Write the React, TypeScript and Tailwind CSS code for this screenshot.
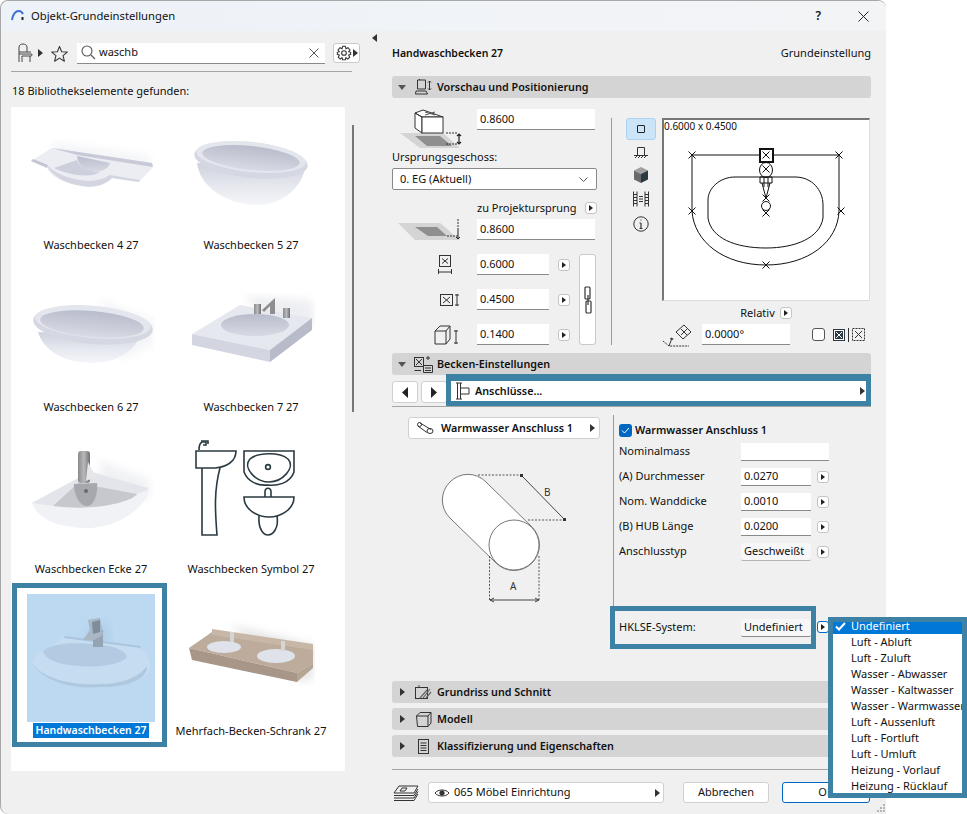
import type { ReactNode } from "react";

const teal = "border-[#3d81a5]";

function Tri({ dir = "right", className = "" }: { dir?: "right" | "down" | "left"; className?: string }) {
  const d = dir === "right" ? "M0 0L5 4L0 8Z" : dir === "down" ? "M0 0H8L4 5Z" : "M5 0L0 4L5 8Z";
  return (
    <svg width={dir === "down" ? 8 : 5} height={dir === "down" ? 5 : 8} className={`shrink-0 ${className}`}>
      <path d={d} fill={dir === "down" ? "#555" : "#333"} />
    </svg>
  );
}

function ArrowBtn({ blue = false }: { blue?: boolean }) {
  return (
    <div className={`flex h-[12px] w-[12px] items-center justify-center rounded-[3px] border bg-white ${blue ? "border-[#0067c0]" : "border-[#c4c4c4]"}`}>
      <svg width="4" height="6"><path d="M0 0L4 3L0 6Z" fill="#222" /></svg>
    </div>
  );
}

function Field({ value, w }: { value: string; w: string }) {
  return (
    <div className={`${w} flex h-[21px] shrink-0 items-center border-b border-[#8a8a8a] bg-white pl-[3px] text-[11px]`}>
      {value}
    </div>
  );
}

function SmallField({ value, w = "w-[70px]" }: { value: string; w?: string }) {
  return (
    <div className={`${w} flex h-[18px] shrink-0 items-center border-b border-[#8a8a8a] bg-white pl-[3px] text-[11px]`}>
      {value}
    </div>
  );
}

function SectionBar({ icon, title, open = false }: { icon: ReactNode; title: string; open?: boolean }) {
  return (
    <div className="flex h-[22px] w-[479px] shrink-0 items-center rounded-[3px] bg-[#d4d4d4]">
      <div className="flex w-[18px] justify-center pl-[2px]">{open ? <Tri dir="down" /> : <Tri />}</div>
      <div className="flex w-[27px] justify-center">{icon}</div>
      <span className="text-[10.75px] font-semibold text-[#111]">{title}</span>
    </div>
  );
}

function Sink({ view, children }: { view: string; children: ReactNode }) {
  return (
    <svg width="128" height="128" viewBox={view} className="overflow-hidden">
      <defs>
        <linearGradient id="bowl" x1="0" y1="0" x2="0" y2="1">
          <stop offset="0" stopColor="#cfd2dd" />
          <stop offset="0.55" stopColor="#e6e8ef" />
          <stop offset="1" stopColor="#f5f6fa" />
        </linearGradient>
        <linearGradient id="inner" x1="0" y1="0" x2="0" y2="1">
          <stop offset="0" stopColor="#b9bccb" />
          <stop offset="1" stopColor="#d8dae4" />
        </linearGradient>
        <linearGradient id="metal" x1="0" y1="0" x2="1" y2="0">
          <stop offset="0" stopColor="#8a8a8c" />
          <stop offset="0.5" stopColor="#b9b9bb" />
          <stop offset="1" stopColor="#6f6f72" />
        </linearGradient>
        <filter id="soft"><feGaussianBlur stdDeviation="4" /></filter>
      </defs>
      {children}
    </svg>
  );
}

const tiles: { label: string; view: string; art: ReactNode }[] = [
  {
    label: "Waschbecken 4 27",
    view: "27 108 128 128",
    art: (
      <>
        <path d="M55 142L150 156L150 168L50 158Z" fill="#e3e5ec" opacity="0.4" filter="url(#soft)" />
        <path d="M52 148L152 163L153 167L139 182L112 178C104 186 92 188 82 186C66 184 52 178 47 168L31 161Z" fill="#ebedf3" />
        <path d="M52 148L152 163L153 167L77 155Z" fill="#c8cbd7" />
        <path d="M48 168C55 178 68 184 82 186C92 188 104 186 112 178L139 182L140 180L110 175C100 181 90 182 80 180C66 178 54 172 48 166Z" fill="#d3d6e1" />
        <path d="M77 156C78 166 86 171 92 172C102 172 108 169 110 163Z" fill="url(#inner)" />
        <path d="M54 168L77 160C80 168 88 172 100 172C92 178 70 176 54 168Z" fill="#cdd0dc" />
        <path d="M31 161L47 168L48 165L33 159Z" fill="#c3c6d2" />
      </>
    ),
  },
  {
    label: "Waschbecken 5 27",
    view: "187 108 128 128",
    art: (
      <>
        <path d="M197 163C200 188 228 205 258 205C284 205 302 186 305 168Z" fill="url(#bowl)" />
        <ellipse cx="251" cy="160" rx="57" ry="18" transform="rotate(6 251 160)" fill="#d5d8e2" />
        <ellipse cx="251" cy="157" rx="55" ry="15" transform="rotate(6 251 157)" fill="#e4e6ed" />
        <ellipse cx="251" cy="158" rx="49" ry="12" transform="rotate(6 251 158)" fill="url(#inner)" />
      </>
    ),
  },
  {
    label: "Waschbecken 6 27",
    view: "27 270 128 128",
    art: (
      <>
        <path d="M100 300L154 320L152 345L120 360Z" fill="#e3e5ec" opacity="0.4" filter="url(#soft)" />
        <path d="M38 332C44 352 66 363 92 363C122 363 136 346 140 336Z" fill="url(#bowl)" />
        <ellipse cx="93" cy="325" rx="60" ry="19" transform="rotate(5 93 325)" fill="#d5d8e2" />
        <ellipse cx="93" cy="322" rx="58" ry="16" transform="rotate(5 93 322)" fill="#e4e6ed" />
        <ellipse cx="92" cy="324" rx="52" ry="13" transform="rotate(5 92 324)" fill="url(#inner)" />
      </>
    ),
  },
  {
    label: "Waschbecken 7 27",
    view: "187 270 128 128",
    art: (
      <>
        <path d="M245 296L312 300L315 325L270 325Z" fill="#d4d6de" opacity="0.4" filter="url(#soft)" />
        <path d="M192 334L240 305L312 318L270 350Z" fill="#e6e8ef" />
        <path d="M192 334L270 350L270 362L192 345Z" fill="#d3d6e1" />
        <path d="M270 350L312 318L312 330L270 362Z" fill="#b8bbc9" />
        <ellipse cx="255" cy="325" rx="34" ry="11" fill="url(#inner)" />
        <rect x="254" y="304" width="7" height="10" fill="url(#metal)" />
        <path d="M262 310L275 298V314H270V306L264 312Z" fill="#8e8e90" />
        <rect x="283" y="308" width="7" height="10" fill="url(#metal)" />
      </>
    ),
  },
  {
    label: "Waschbecken Ecke 27",
    view: "27 432 128 128",
    art: (
      <>
        <path d="M100 460L150 480L148 500L100 490Z" fill="#d6d8e0" opacity="0.35" filter="url(#soft)" />
        <path d="M32 503L84 475L92 472L148 488C150 505 118 528 88 528C60 528 38 520 32 503Z" fill="#f0f2f6" />
        <path d="M32 503L84 475L92 472L148 488L147 490C110 505 70 510 32 503Z" fill="#e3e5ea" />
        <path d="M53 506L78 483L137 494C134 500 100 512 53 506Z" fill="#c6c8ce" />
        <path d="M74 484C74 496 80 506 87 506C94 506 98 494 97 483Z" fill="#a6a8ae" />
        <circle cx="86" cy="491" r="2" fill="#6a6a70" />
        <rect x="78" y="451" width="12" height="32" rx="3" fill="url(#metal)" />
        <path d="M88 462L96 477L86 481Z" fill="#e7e7ea" />
      </>
    ),
  },
  {
    label: "Waschbecken Symbol 27",
    view: "187 432 128 128",
    art: (
      <g fill="none" stroke="#2b3a42" strokeWidth="1.6">
        <path d="M196 451H236C236 462 226 467 215 468H196Z" />
        <path d="M202 468V535H217C215 510 214 490 220 468" />
        <path d="M199 450C199 446 200 443 202 442H206V445H203" />
        <path d="M201 441H208V444" />
        <path d="M244 451H294V472C290 484 276 486 268 485C258 486 248 482 244 472Z" />
        <path d="M250 459C258 452 280 452 288 459C296 468 282 482 269 482C256 482 242 468 250 459Z" />
        <circle cx="268" cy="467" r="2.4" />
        <path d="M244 497H294C294 510 280 517 269 517C258 517 244 510 244 497Z" />
        <path d="M259 516C258 530 264 535 268 535C273 535 279 528 277 516" />
        <path d="M265 497V492C265 487 271 487 271 492V497" />
      </g>
    ),
  },
  {
    label: "Handwaschbecken 27",
    view: "27 594 128 128",
    art: (
      <>
        <rect x="27" y="594" width="128" height="128" fill="#bcd9f1" />
        <path d="M92 620L110 625L108 650L80 650Z" fill="#a8c8e4" opacity="0.6" filter="url(#soft)" />
        <path d="M65 636L132 645C146 650 152 660 150 668C146 680 124 688 100 687C72 690 40 680 32 662C36 652 44 650 46 650Z" fill="#c6dcf0" />
        <path d="M65 636L140 646L141 648L64 638Z" fill="#a9c4dd" />
        <path d="M43 652C48 644 70 642 92 644C112 645 126 650 127 657C122 664 100 668 80 666C60 665 46 660 43 652Z" fill="#b2cbe3" />
        <path d="M32 662C40 678 72 686 100 684C124 684 140 676 147 666C148 680 124 688 100 687C72 690 40 680 32 662Z" fill="#aec8e0" />
        <rect x="93" y="630" width="10" height="17" fill="#94a4b4" />
        <path d="M88 620L100 618L103 635L94 640L83 640L90 630Z" fill="#a9b6c4" />
        <path d="M92 622L100 620L100 632L93 634Z" fill="#7f8d9b" />
      </>
    ),
  },
  {
    label: "Mehrfach-Becken-Schrank 27",
    view: "187 594 128 128",
    art: (
      <>
        <path d="M230 625L314 645L312 680L296 680Z" fill="#d2d2d2" opacity="0.6" filter="url(#soft)" />
        <path d="M212 632L313 648V663L297 673L189 648Z" fill="#bdac9b" />
        <path d="M212 629L313 644V650L212 635Z" fill="#c8b7a6" />
        <path d="M189 648L297 673V682L192 660Z" fill="#a89788" />
        <path d="M297 673L313 663V668L297 682Z" fill="#b5a595" />
        <ellipse cx="224" cy="647" rx="17" ry="6" fill="#dfe2ea" />
        <ellipse cx="276" cy="656" rx="19" ry="7" fill="#dfe2ea" />
        <rect x="230" y="632" width="4" height="10" fill="#d5d5d5" />
        <rect x="281" y="641" width="4" height="10" fill="#d5d5d5" />
      </>
    ),
  },
];

function LeftPanel() {
  return (
    <div className="flex w-[371px] shrink-0 flex-col pl-[10px] pt-[11px]">
      <div className="flex h-[22px] items-center">
        <svg width="18" height="20" viewBox="0 0 18 20" fill="none" stroke="#444" strokeWidth="1" className="ml-[6px]">
          <path d="M2 19V4C2 2 4 1 6 1C8 1 10 2 10 4V9H2M2 11H14C16 11 15 13 14 13H5V19M13 13V19M10 9H14" />
        </svg>
        <Tri className="ml-[3px]" />
        <svg width="17" height="17" viewBox="0 0 24 24" fill="none" stroke="#333" strokeWidth="1.5" strokeLinejoin="round" className="ml-[8px]">
          <path d="M12 2L15 9.5L23 10L17 15L19 23L12 18.5L5 23L7 15L1 10L9 9.5Z" />
        </svg>
        <div className="ml-[9px] flex h-[21px] w-[248px] items-center border-b border-[#8a8a8a] bg-white">
          <svg width="15" height="15" viewBox="0 0 15 15" fill="none" stroke="#555" strokeWidth="1.1" className="ml-[4px]">
            <circle cx="6" cy="6" r="5" />
            <path d="M10 10L14 14" />
          </svg>
          <span className="ml-[3px] text-[11px]">waschb</span>
          <svg width="10" height="10" stroke="#555" className="ml-auto mr-[6px]">
            <path d="M0.5 0.5L9.5 9.5M9.5 0.5L0.5 9.5" />
          </svg>
        </div>
        <div className="ml-[8px] flex h-[20px] w-[27px] items-center justify-center gap-[1px] rounded-[3px] border border-[#c9c9c9] bg-white">
          <svg width="16" height="16" viewBox="0 0 24 24" fill="none" stroke="#333" strokeWidth="1.6">
            <circle cx="12" cy="12" r="3.5" />
            <path d="M10 2H14L15 5.5L18 4L21 7.5L19 10L22 11V14L19 15L20.5 18.5L17.5 21L15 19L14 22H10L9 19L6.5 21L3.5 18.5L5 15L2 14V11L5 10L3 7.5L6 4L9 5.5Z" />
          </svg>
          <Tri />
        </div>
      </div>
      <div className="mt-[7px] h-px w-[341px] bg-[#a5a5a5]" />
      <div className="mt-[11px] h-[16px] pl-[1px] text-[11px] leading-[16px]">18 Bibliothekselemente gefunden:</div>
      <div className="mt-[8px] flex">
        <div className="grid h-[664px] w-[334px] grid-cols-[160px_160px] content-start bg-white pt-[1px]">
          {tiles.map((t, i) => (
            <div key={t.label} className="relative flex h-[162px] flex-col items-center">
              <Sink view={t.view}>{t.art}</Sink>
              <span className={`mt-[1px] whitespace-nowrap leading-[15px] ${i === 6 ? "bg-[#0078d7] px-[2px] text-[10.5px] font-semibold text-white" : "px-[1px] text-[11px] text-[#111]"}`}>
                {t.label}
              </span>
              {i === 6 && <div className={`absolute left-[1px] top-[-11px] h-[164px] w-[155px] border-[5px] ${teal}`} />}
            </div>
          ))}
        </div>
        <div className="ml-[7px] mt-[18px] h-[287px] w-[2px] bg-[#777]" />
      </div>
    </div>
  );
}

function PreviewSection() {
  return (
    <div className="flex h-[255px] shrink-0">
      <div className="flex w-[206px] flex-col">
        <div className="flex h-[41px] pt-[10px]">
          <svg width="85" height="41" viewBox="0 0 85 41" className="shrink-0">
            <path d="M8 25H51L68 40H28Z" fill="#d4d4d4" />
            <path d="M23 28H48L60 38H35Z" fill="#8f8f8f" />
            <g fill="#fff" stroke="#333">
              <path d="M23 5L31 2L51 9H30ZM23 5L30 9V25L23 20Z" />
              <rect x="30" y="9" width="21" height="16" />
            </g>
            <path d="M33 4L43 7M43 4L33 7" stroke="#555" />
            <path d="M54 25H65M54 36H65" stroke="#333" strokeDasharray="2 1" />
            <path d="M67 26V36M65 28L67 26L69 28M65 34L67 36L69 34" stroke="#222" fill="none" strokeWidth="1.2" />
          </svg>
          <div className="mt-[1px]"><Field value="0.8600" w="w-[118px]" /></div>
        </div>
        <div className="mt-[10px] h-[16px] text-[11px] leading-[16px]">Ursprungsgeschoss:</div>
        <div className="mt-[3px] flex h-[22px] w-[205px] items-center justify-between rounded-[2px] border border-[#8a8a8a] bg-white pl-[7px] pr-[8px] text-[11px]">
          0. EG (Aktuell)
          <svg width="9" height="5" fill="none" stroke="#555"><path d="M0.5 0.5L4.5 4.5L8.5 0.5" /></svg>
        </div>
        <div className="ml-[85px] mt-[10px] flex h-[16px] items-center gap-[8px] whitespace-nowrap text-[11px]">
          zu Projektursprung
          <ArrowBtn />
        </div>
        <div className="mt-[3px] flex h-[21px]">
          <svg width="85" height="21" viewBox="0 0 85 21" className="shrink-0">
            <path d="M6 4H48L68 21H23Z" fill="#d4d4d4" />
            <path d="M23 8H45L55 17H36Z" fill="#8f8f8f" />
            <path d="M55 17H66M66 0V10" stroke="#333" strokeDasharray="2 1" />
            <path d="M66 10V20M64 18L66 20L68 18" stroke="#222" fill="none" />
          </svg>
          <Field value="0.8600" w="w-[118px]" />
        </div>
        <div className="mt-[14px] flex">
          <div className="flex w-[85px] flex-col items-end gap-[14px] pr-[17px]">
            <svg width="14" height="21" fill="none" stroke="#333" className="mr-[8px]">
              <rect x="1.5" y="1.5" width="11" height="11" />
              <path d="M4 4.5L10 9.5M10 4.5L4 9.5M0.5 15V20M13.5 15V20M0.5 18H13.5" />
            </svg>
            <svg width="20" height="21" fill="none" stroke="#333">
              <rect x="0.5" y="5.5" width="12" height="11" />
              <path d="M3 8L10 14M10 8L3 14M17 5V17M15 6H19M15 16H19" />
            </svg>
            <svg width="26" height="21" fill="none" stroke="#333">
              <path d="M1 7L6 2H16L12 7V20H1ZM12 7H1M16 2V15L12 20M22 6V20M20 7H24M20 19H24" />
            </svg>
          </div>
          <div className="flex flex-col gap-[14px]">
            {["0.6000", "0.4500", "0.1400"].map((v) => (
              <div key={v} className="flex h-[21px] items-center">
                <Field value={v} w="w-[72px]" />
                <div className="ml-[9px]"><ArrowBtn /></div>
              </div>
            ))}
          </div>
          <div className="ml-[9px] flex h-[91px] w-[17px] items-center justify-center rounded-[3px] border border-[#c9c9c9] bg-white">
            <svg width="8" height="28" fill="none" stroke="#333" strokeWidth="1.2">
              <rect x="1" y="1" width="5" height="12" rx="1" />
              <rect x="2" y="15" width="5" height="12" rx="1" />
              <path d="M4 9V19" />
            </svg>
          </div>
        </div>
      </div>
      <div className="ml-[13px] mt-[20px] h-[227px] w-px bg-[#9a9a9a]" />
      <div className="ml-[14px] mt-[20px] flex w-[30px] flex-col items-center">
        <div className="flex h-[22px] w-[30px] items-center justify-center rounded-[3px] border border-[#a9d3f5] bg-[#cce4f7]">
          <div className="h-[8px] w-[8px] rounded-[1px] border border-[#222]" />
        </div>
        <svg width="14" height="14" fill="none" stroke="#333" className="mt-[6px]">
          <path d="M3.5 9V1.5H10.5V9M0 9.5H14M1 12L3 10M4 12L6 10M7 12L9 10M10 12L12 10" />
        </svg>
        <svg width="14" height="16" className="mt-[7px]">
          <path d="M7 0L14 3.5L7 7L0 3.5Z" fill="#a0a0a0" />
          <path d="M0 3.5L7 7V16L0 12.5Z" fill="#6a6a6a" />
          <path d="M14 3.5L7 7V16L14 12.5Z" fill="#2b3a42" />
        </svg>
        <svg width="16" height="16" fill="none" stroke="#333" className="mt-[8px]">
          <path d="M0.5 0.5V15.5M15.5 0.5V15.5M4 0.5V15.5M12 0.5V15.5M0 3.5H4M0 6.5H4M0 9.5H4M0 12.5H4M12 3.5H16M12 6.5H16M12 9.5H16M12 12.5H16M6 5.5H10M6 8H10M6 10.5H10" />
        </svg>
        <svg width="16" height="16" fill="none" stroke="#333" className="mt-[9px]">
          <circle cx="8" cy="8" r="7.2" />
          <path d="M8 7V12.5M6.5 7H8M6.5 12.5H9.5M7.5 4H8.5" strokeWidth="1.2" />
        </svg>
      </div>
      <div className="ml-[6px] mt-[20px] flex w-[208px] flex-col">
        <div className="relative h-[183px] w-[208px] border-l-2 border-r border-t-2 border-b border-l-[#777] border-t-[#777] border-r-[#dcdcdc] border-b-[#dcdcdc] bg-white">
          <svg width="206" height="181" viewBox="664 120 206 181" fill="none" stroke="#111" className="absolute left-0 top-0">
            <path d="M692 155H840M692 155V211C694 242 724 265 766 265C808 265 838 242 839 211V155" />
            <path d="M735 177H795C812 177 823 190 823 205V218C820 238 795 248 766 248C735 248 711 238 708 218V200C708 188 720 177 735 177Z" />
            <rect x="760" y="149" width="13" height="13" strokeWidth="2" fill="#fff" />
            <ellipse cx="766" cy="170" rx="6.5" ry="7.5" />
            <path d="M760 177H772V183H760ZM762 183L766 198L770 183M764 178V187M768 178V187" />
            <circle cx="766" cy="206" r="4.5" />
            {[[692, 155], [839, 155], [692, 211], [841, 211], [766, 265], [766, 169], [766, 213], [766, 155], [766, 198]].map(([x, y]) => (
              <path key={`${x}-${y}`} d={`M${x - 3.5} ${y - 3.5}L${x + 3.5} ${y + 3.5}M${x + 3.5} ${y - 3.5}L${x - 3.5} ${y + 3.5}`} />
            ))}
            <text x="664" y="130" fill="#111" stroke="none" fontSize="10">0.6000 x 0.4500</text>
          </svg>
        </div>
        <div className="mt-[4px] flex h-[16px] items-center justify-center gap-[5px] text-[11px]">
          Relativ
          <ArrowBtn />
        </div>
        <div className="mt-[3px] flex h-[21px] items-center">
          <svg width="28" height="24" viewBox="0 0 28 24" fill="none" stroke="#333" className="ml-[1px] shrink-0">
            <path d="M13 9L21 2L28 9L20 16Z" />
            <path d="M18 6L24 12M24 6L18 12" />
            <path d="M0 18L6 23H26" strokeDasharray="2 1" />
            <path d="M6 23L9 15M7 16L9 15L10 17" />
          </svg>
          <div className="ml-[11px]"><Field value="0.0000°" w="w-[88px]" /></div>
          <div className="ml-[22px] h-[13px] w-[13px] rounded-[3px] border border-[#555] bg-white" />
          <div className="ml-[8px] flex h-[12px] w-[12px] items-center justify-center bg-[#2b3a42]">
            <svg width="10" height="10" fill="none" stroke="#fff"><rect x="0.5" y="0.5" width="9" height="9" stroke="#fff" /><path d="M2 2L8 8M8 2L2 8" /></svg>
          </div>
          <div className="ml-[3px] h-[14px] w-px bg-[#333]" />
          <svg width="13" height="13" fill="none" stroke="#333" strokeDasharray="2 1" className="ml-[3px]">
            <rect x="0.5" y="0.5" width="12" height="12" />
            <path d="M3 3L10 10M10 3L3 10" strokeDasharray="none" />
          </svg>
        </div>
      </div>
    </div>
  );
}

const params = [
  { label: "Nominalmass", value: "", wide: true },
  { label: "(A) Durchmesser", value: "0.0270" },
  { label: "Nom. Wanddicke", value: "0.0010" },
  { label: "(B) HUB Länge", value: "0.0200" },
];

function BeckenSection() {
  return (
    <div className="flex h-[274px] shrink-0 flex-col">
      <div className="flex h-[199px]">
        <div className="flex w-[221px] flex-col">
          <div className="ml-[16px] mt-[10px] flex h-[22px] w-[192px] items-center rounded-[3px] border border-[#d0d0d0] bg-white pl-[8px] pr-[4px]">
            <svg width="17" height="12" fill="none" stroke="#333">
              <path d="M3 1L14 7.5M0.8 4L10 10.5" />
              <ellipse cx="2.5" cy="2.5" rx="2" ry="2" />
              <ellipse cx="13" cy="9" rx="3" ry="2.5" />
            </svg>
            <span className="ml-[7px] text-[10.75px] font-semibold">Warmwasser Anschluss 1</span>
            <Tri className="ml-auto" />
          </div>
          <svg width="221" height="166" viewBox="392 440 221 166" className="mt-[1px]" fill="none">
            <path d="M450 482A25 25 0 0 1 486 482L532 527A25 25 0 0 1 496 563L450 518A25 25 0 0 1 450 482Z" fill="#fff" stroke="#777" />
            <circle cx="514" cy="545" r="25" fill="#fff" stroke="#777" />
            <path d="M478 475H522M528 520H564M489.5 556V600M539 556V600" stroke="#555" strokeDasharray="2 1.5" />
            <path d="M522 476L564 519M490 600H539M490 600L494 598M490 600L494 602M539 600L535 598M539 600L535 602" stroke="#444" />
            <rect x="520" y="474" width="3" height="3" fill="#333" />
            <rect x="563" y="518" width="3" height="3" fill="#333" />
            <text x="544" y="496" fontSize="10" fill="#333">B</text>
            <text x="510" y="590" fontSize="10" fill="#333">A</text>
          </svg>
        </div>
        <div className="mt-[8px] h-[191px] w-px bg-[#9a9a9a]" />
        <div className="ml-[5px] flex flex-col">
          <div className="mt-[16px] flex h-[14px] items-center">
            <div className="flex h-[13px] w-[13px] items-center justify-center rounded-[3px] bg-[#0067c0]">
              <svg width="9" height="7" fill="none" stroke="#fff"><path d="M1 3.5L3.5 6L8 1" /></svg>
            </div>
            <span className="ml-[3px] text-[10.75px] font-semibold">Warmwasser Anschluss 1</span>
          </div>
          <div className="mt-[2px] flex flex-col">
            {params.map((p) => (
              <div key={p.label} className="flex h-[25px] items-center">
                <span className="w-[122px] text-[11px]">{p.label}</span>
                <SmallField value={p.value} w={p.wide ? "w-[88px]" : "w-[70px]"} />
                {!p.wide && <div className="ml-[6px]"><ArrowBtn /></div>}
              </div>
            ))}
            <div className="flex h-[25px] items-center">
              <span className="w-[122px] text-[11px]">Anschlusstyp</span>
              <div className="flex h-[18px] w-[70px] items-center rounded-[2px] border-b border-[#b5b5b5] bg-[#f7f7f7] pl-[3px] text-[11px]">Geschweißt</div>
              <div className="ml-[6px]"><ArrowBtn /></div>
            </div>
          </div>
        </div>
      </div>
      <div className="ml-[218px] flex">
        <div className={`flex h-[43px] w-[206px] items-center border-[5px] pl-[4px] ${teal}`}>
          <span className="w-[122px] text-[11px]">HKLSE-System:</span>
          <div className="flex h-[18px] w-[70px] items-center rounded-[2px] border-b border-[#8a8a8a] bg-[#f7f7f7] pl-[3px] text-[11px]">Undefiniert</div>
        </div>
        <div className="ml-[1px] mt-[15px]"><ArrowBtn blue /></div>
      </div>
    </div>
  );
}

const systems = [
  "Undefiniert",
  "Luft - Abluft",
  "Luft - Zuluft",
  "Wasser - Abwasser",
  "Wasser - Kaltwasser",
  "Wasser - Warmwasser",
  "Luft - Aussenluft",
  "Luft - Fortluft",
  "Luft - Umluft",
  "Heizung - Vorlauf",
  "Heizung - Rücklauf",
];

function RightPanel() {
  return (
    <div className="flex w-[480px] flex-col">
      <div className="flex h-[45px] shrink-0 items-center justify-between pr-[1px]">
        <span className="text-[10.5px] font-semibold">Handwaschbecken 27</span>
        <span className="text-[11px]">Grundeinstellung</span>
      </div>
      <SectionBar
        open
        title="Vorschau und Positionierung"
        icon={
          <svg width="18" height="16" fill="none" stroke="#333">
            <path d="M2.5 1H10.5V10H2.5ZM4.5 1V0M1 12H11L12.5 15H0.5ZM14.5 2V11M13 3.5L14.5 2L16 3.5M13 9.5L14.5 11L16 9.5" />
          </svg>
        }
      />
      <PreviewSection />
      <SectionBar
        open
        title="Becken-Einstellungen"
        icon={
          <svg width="19" height="17" fill="none" stroke="#333">
            <rect x="0.5" y="1.5" width="9" height="9" />
            <path d="M2 3L8 9M8 3L2 9M14 0V4M12 2H16M9.5 9.5H18.5V16.5H9.5ZM11 12H17M11 14.5H17M0.5 14.5H7" />
          </svg>
        }
      />
      <div className="-mt-[1px] flex h-[33px] w-[479px] shrink-0 border-b border-[#a5a5a5]">
        <div className="mt-[7px] flex h-[22px] w-[26px] items-center justify-center rounded-[3px] border border-[#d0d0d0] bg-white">
          <svg width="6" height="11"><path d="M6 0L0 5.5L6 11Z" fill="#222" /></svg>
        </div>
        <div className="ml-[3px] mt-[7px] flex h-[22px] w-[26px] items-center justify-center rounded-[3px] border border-[#d0d0d0] bg-white">
          <svg width="6" height="11"><path d="M0 0L6 5.5L0 11Z" fill="#222" /></svg>
        </div>
        <div className={`-ml-[1px] flex h-[32px] w-[425px] items-center border-[5px] border-t-[7px] bg-white pl-[4px] pr-[1px] ${teal}`}>
          <svg width="17" height="18" fill="none" stroke="#333">
            <path d="M1 1H7M1 17H7M2.5 1V17M5.5 1V17M5.5 6H14V12H5.5" />
          </svg>
          <span className="ml-[3px] text-[10.75px] font-semibold">Anschlüsse...</span>
          <Tri className="ml-auto" />
        </div>
      </div>
      <BeckenSection />
      <div className="flex flex-col gap-[5px]">
        <SectionBar
          title="Grundriss und Schnitt"
          icon={
            <svg width="17" height="15" fill="none" stroke="#333">
              <rect x="0.5" y="2.5" width="12" height="11" />
              <path d="M5 13L12 5M8 13L15 4M11 13L16 7M4 0V2" strokeWidth="1.2" stroke="#666" />
            </svg>
          }
        />
        <SectionBar
          title="Modell"
          icon={
            <svg width="16" height="15" fill="none" stroke="#333">
              <path d="M0.5 4L4 0.5H15L12 4V14.5H1.5ZM0.5 4H12M15 0.5V11L12 14.5" />
            </svg>
          }
        />
        <SectionBar
          title="Klassifizierung und Eigenschaften"
          icon={
            <svg width="11" height="15" fill="none" stroke="#333">
              <rect x="0.5" y="0.5" width="10" height="14" />
              <path d="M2.5 4H8.5M2.5 6.5H8.5M2.5 9H8.5M2.5 11.5H8.5" />
            </svg>
          }
        />
      </div>
      <div className="mt-[12px] h-px w-[479px] bg-[#a5a5a5]" />
      <div className="mt-[12px] flex h-[21px] items-center">
        <svg width="26" height="16" fill="none" stroke="#333" className="ml-[1px]">
          <path d="M6 1H25L21 8H1ZM1 10.5H21L25 4M1 13H21L25 6.5M1 15.5H21L25 9M9 3H14L12 6H7Z" />
        </svg>
        <div className="ml-[9px] flex h-[21px] w-[236px] items-center rounded-[3px] border border-[#d0d0d0] bg-white pl-[5px] pr-[3px] text-[11px]">
          <svg width="16" height="10" fill="none" stroke="#333">
            <path d="M1 5C4 1 12 1 15 5C12 9 4 9 1 5Z" />
            <circle cx="8" cy="5" r="2.2" fill="#333" />
          </svg>
          <span className="ml-[4px]">065 Möbel Einrichtung</span>
          <Tri className="ml-auto" />
        </div>
        <div className="ml-[19px] flex h-[21px] w-[86px] items-center justify-center rounded-[3px] border border-[#d0d0d0] bg-white text-[11px]">Abbrechen</div>
        <div className="ml-[13px] flex h-[21px] w-[88px] items-center justify-center rounded-[3px] border border-[#0067c0] bg-white text-[11px]">OK</div>
      </div>
    </div>
  );
}

export default function App() {
  return (
    <div className="relative h-[814px] w-[967px] overflow-hidden bg-white font-['Noto_Sans',sans-serif] text-[#111]">
      <div className="relative flex h-[814px] w-[886px] flex-col rounded-t-[8px] rounded-bl-[8px] border-l border-t border-[#a8a8a8] bg-[#f0f0f0]">
        <div className="flex h-[30px] shrink-0 items-center rounded-t-[8px] bg-gradient-to-r from-[#edf2f9] to-[#f3f4f6]">
          <svg width="13" height="11" fill="none" className="ml-[10px] mt-[-1px]">
            <path d="M1 10C2 4 5 1 8 1C10 1 11 2 12 4" stroke="#3d6fd6" strokeWidth="2" />
            <path d="M11.5 7V10" stroke="#222" strokeWidth="2" />
          </svg>
          <span className="ml-[7px] text-[11.25px]">Objekt-Grundeinstellungen</span>
          <span className="ml-auto text-[12px] font-semibold">?</span>
          <svg width="11" height="11" stroke="#222" className="ml-[37px] mr-[17px]">
            <path d="M0.5 0.5L10.5 10.5M10.5 0.5L0.5 10.5" />
          </svg>
        </div>
        <div className="flex flex-1">
          <LeftPanel />
          <div className="w-[20px] shrink-0 pt-[3px]">
            <Tri dir="left" />
          </div>
          <RightPanel />
        </div>
        <svg width="11" height="11" className="absolute bottom-0 right-0" fill="#b5b5b5">
          <path d="M8 1h2v2H8zM5 4h2v2H5zM8 4h2v2H8zM2 7h2v2H2zM5 7h2v2H5zM8 7h2v2H8z" />
        </svg>
      </div>
      <div className={`absolute left-[828px] top-[617px] h-[181px] w-[139px] overflow-hidden border-[5px] bg-white ${teal}`}>
        {systems.map((s, i) => (
          <div key={s} className={`relative h-[16px] whitespace-nowrap pl-[18px] text-[11px] leading-[16px] ${i === 0 ? "-mt-[4px] bg-[#0078d7] text-white" : ""}`}>
            {i === 0 && (
              <svg width="11" height="9" fill="none" stroke="#fff" strokeWidth="2" className="absolute left-[2px] top-[4px]">
                <path d="M1 4.5L4 7.5L10 1" />
              </svg>
            )}
            {s}
          </div>
        ))}
      </div>
    </div>
  );
}
